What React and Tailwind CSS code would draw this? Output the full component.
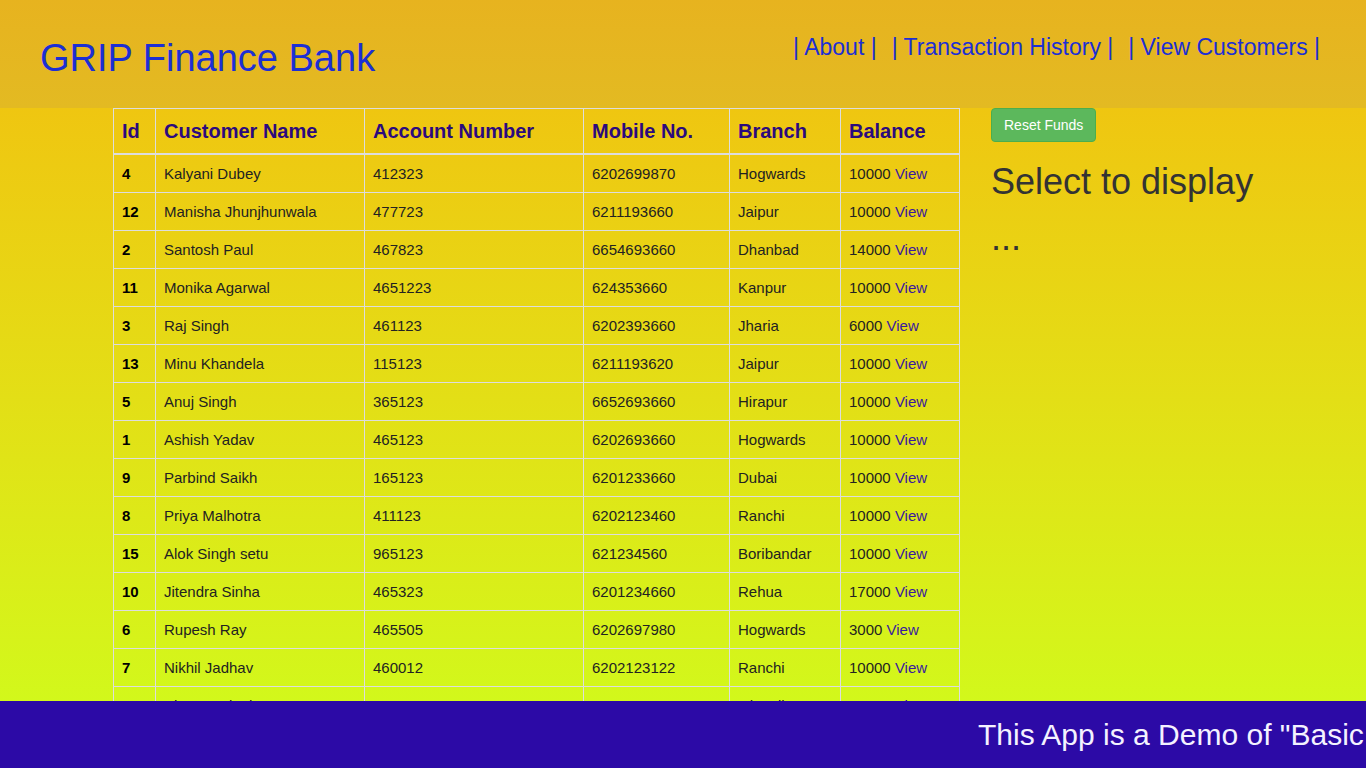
const customers = [
  { id: 4, name: "Kalyani Dubey", acc: "412323", mobile: "6202699870", branch: "Hogwards", balance: 10000 },
  { id: 12, name: "Manisha Jhunjhunwala", acc: "477723", mobile: "6211193660", branch: "Jaipur", balance: 10000 },
  { id: 2, name: "Santosh Paul", acc: "467823", mobile: "6654693660", branch: "Dhanbad", balance: 14000 },
  { id: 11, name: "Monika Agarwal", acc: "4651223", mobile: "624353660", branch: "Kanpur", balance: 10000 },
  { id: 3, name: "Raj Singh", acc: "461123", mobile: "6202393660", branch: "Jharia", balance: 6000 },
  { id: 13, name: "Minu Khandela", acc: "115123", mobile: "6211193620", branch: "Jaipur", balance: 10000 },
  { id: 5, name: "Anuj Singh", acc: "365123", mobile: "6652693660", branch: "Hirapur", balance: 10000 },
  { id: 1, name: "Ashish Yadav", acc: "465123", mobile: "6202693660", branch: "Hogwards", balance: 10000 },
  { id: 9, name: "Parbind Saikh", acc: "165123", mobile: "6201233660", branch: "Dubai", balance: 10000 },
  { id: 8, name: "Priya Malhotra", acc: "411123", mobile: "6202123460", branch: "Ranchi", balance: 10000 },
  { id: 15, name: "Alok Singh setu", acc: "965123", mobile: "621234560", branch: "Boribandar", balance: 10000 },
  { id: 10, name: "Jitendra Sinha", acc: "465323", mobile: "6201234660", branch: "Rehua", balance: 17000 },
  { id: 6, name: "Rupesh Ray", acc: "465505", mobile: "6202697980", branch: "Hogwards", balance: 3000 },
  { id: 7, name: "Nikhil Jadhav", acc: "460012", mobile: "6202123122", branch: "Ranchi", balance: 10000 },
  { id: 14, name: "Bhavna Singh", acc: "466123", mobile: "6202123456", branch: "Ghatsila", balance: 10000 },
];

const th = "border border-[#ddd] border-b-2 px-2 py-2 text-left font-bold text-[20px] leading-[28px] text-[#2b0a7e]";
const td = "border border-[#ddd] px-2 py-2 text-[15px] leading-[21px] text-[#222]";

const App = () => {
  return (
    <div className="h-screen flex flex-col overflow-hidden font-['Liberation_Sans',Arial,sans-serif]">
      <header className="h-[108px] shrink-0 flex justify-between bg-gradient-to-b from-[#e7b31f] to-[#e3ba22]">
        <h1 className="pl-[40px] pt-[37px] text-[38px] leading-[42px] text-[#1c2fd4]">
          GRIP Finance Bank
        </h1>
        <nav className="flex gap-[15px] pt-[31px] pr-[46px] text-[23px] leading-[32px] text-[#1c2fd4]">
          <a href="#">| About |</a>
          <a href="#">| Transaction History |</a>
          <a href="#">| View Customers |</a>
        </nav>
      </header>

      <main className="flex-1 min-h-0 overflow-hidden flex gap-[31px] pl-[113px] bg-gradient-to-b from-[#efc611] to-[#d2f81b]">
        <table className="w-[846px] table-fixed border-collapse self-start">
          <colgroup>
            <col className="w-[42px]" />
            <col className="w-[209px]" />
            <col className="w-[219px]" />
            <col className="w-[146px]" />
            <col className="w-[111px]" />
            <col className="w-[119px]" />
          </colgroup>
          <thead>
            <tr>
              <th className={th}>Id</th>
              <th className={th}>Customer Name</th>
              <th className={th}>Account Number</th>
              <th className={th}>Mobile No.</th>
              <th className={th}>Branch</th>
              <th className={th}>Balance</th>
            </tr>
          </thead>
          <tbody>
            {customers.map((c) => (
              <tr key={c.id}>
                <td className={`${td} font-bold text-black`}>{c.id}</td>
                <td className={td}>{c.name}</td>
                <td className={td}>{c.acc}</td>
                <td className={td}>{c.mobile}</td>
                <td className={td}>{c.branch}</td>
                <td className={td}>
                  {c.balance} <a href="#" className="text-[#3a1a9e]">View</a>
                </td>
              </tr>
            ))}
          </tbody>
        </table>

        <div className="flex flex-col items-start">
          <button className="h-[34px] px-[12px] rounded-[4px] border border-[#4cae4c] bg-[#5cb85c] text-white text-[14px]">
            Reset Funds
          </button>
          <h2 className="mt-[20px] text-[36px] leading-[40px] text-[#333]">Select to display</h2>
          <h2 className="mt-[16px] text-[36px] leading-[40px] text-[#333]">...</h2>
        </div>
      </main>

      <footer className="h-[67px] shrink-0 flex items-center overflow-hidden bg-[#2c0aa6]">
        <p className="pl-[978px] whitespace-nowrap text-[30px] text-[#f4f2ff]">
          This App is a Demo of "Basic Banking System" made for The Sparks Foundation GRIP internship
        </p>
      </footer>
    </div>
  );
};

export default App;
